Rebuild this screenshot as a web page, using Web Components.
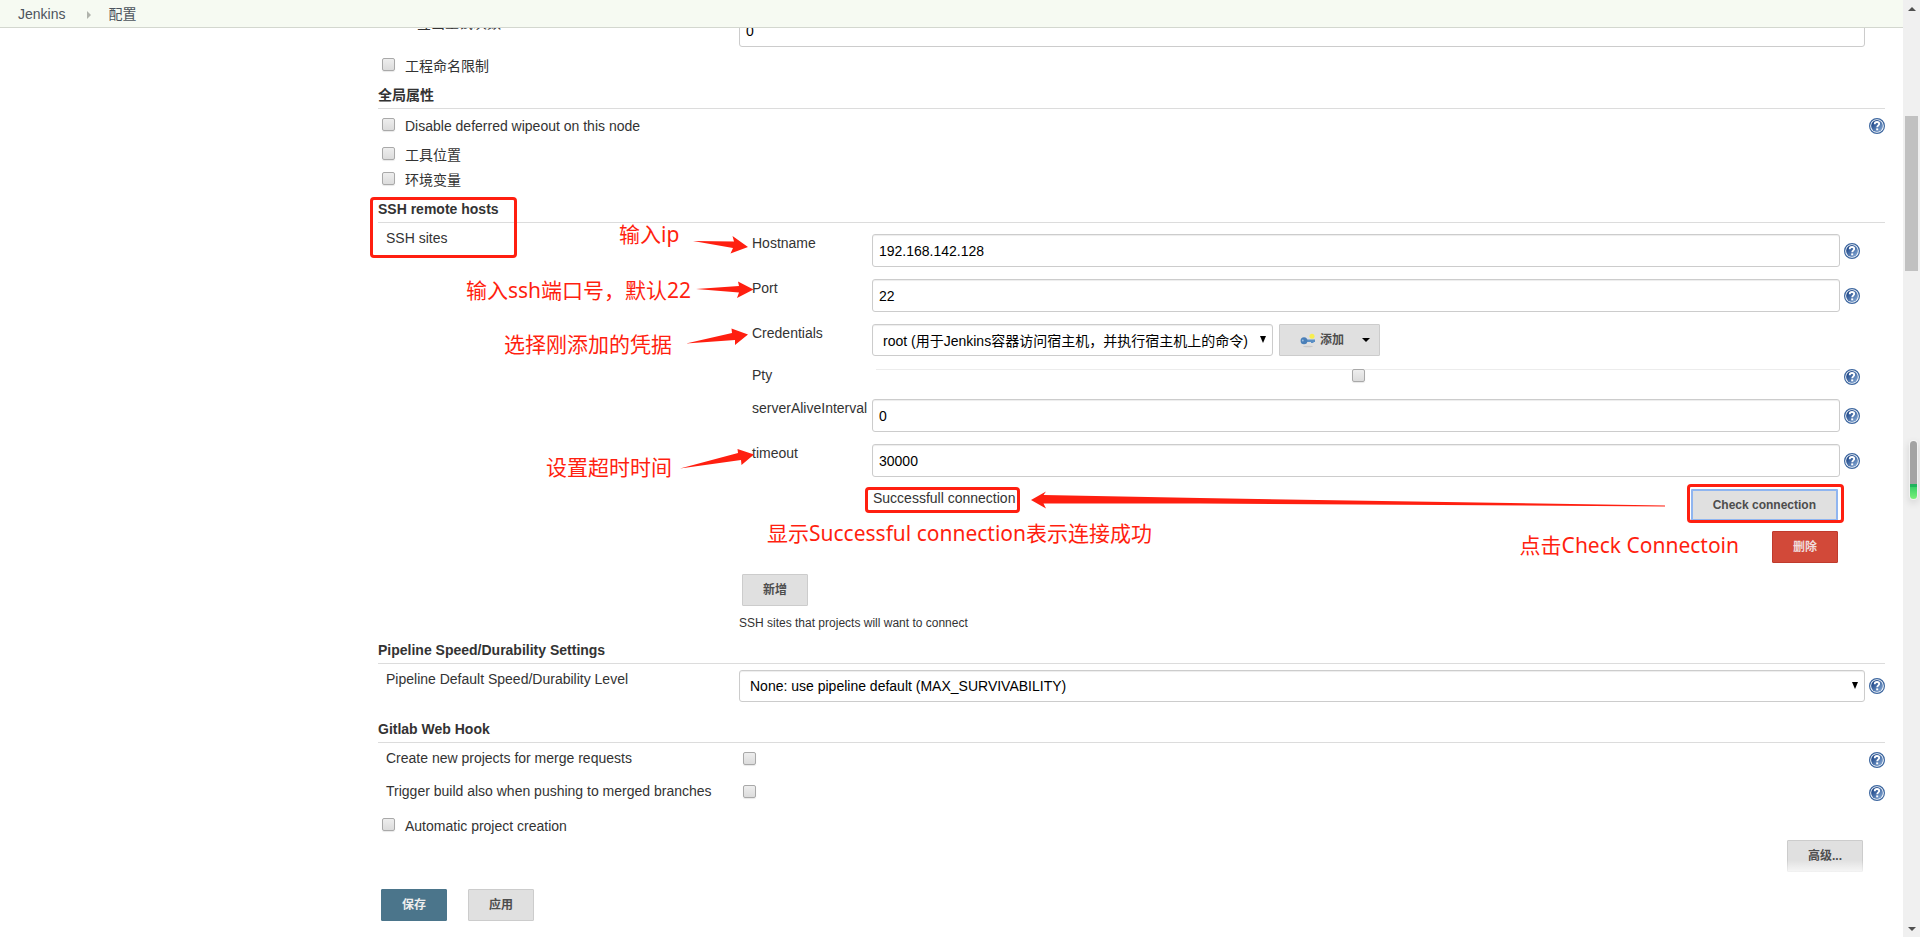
<!DOCTYPE html>
<html lang="zh-CN">
<head>
<meta charset="utf-8">
<title>配置 [Jenkins]</title>
<style>
  html, body { height: 100%; margin: 0; }
  body {
    background: #fff; color: #333; overflow: hidden;
    font: 14px/16px "Liberation Sans", "Noto Sans CJK SC", sans-serif;
  }
</style>
</head>
<body>
<jk-page>
  <jk-breadcrumbs slot="header"></jk-breadcrumbs>

  <jk-section>
    <jk-field compact kind="text" label="SCM签出重试次数" value="0"></jk-field>
    <jk-option label="工程命名限制"></jk-option>
  </jk-section>

  <jk-section heading="全局属性">
    <jk-option label="Disable deferred wipeout on this node" help></jk-option>
    <jk-option label="工具位置"></jk-option>
    <jk-option label="环境变量"></jk-option>
  </jk-section>

  <jk-section heading="SSH remote hosts" flush>
    <jk-group label="SSH sites">
      <jk-field inner kind="text" label="Hostname" value="192.168.142.128" help></jk-field>
      <jk-field inner kind="text" label="Port" value="22" help></jk-field>
      <jk-field inner kind="credentials" label="Credentials" value="root (用于Jenkins容器访问宿主机，并执行宿主机上的命令)"></jk-field>
      <jk-field inner kind="ruled" label="Pty" help></jk-field>
      <jk-field inner kind="text" label="serverAliveInterval" value="0" help></jk-field>
      <jk-field inner kind="text" label="timeout" value="30000" help></jk-field>
      <jk-validation status="Successfull connection"></jk-validation>
    </jk-group>
  </jk-section>

  <jk-section heading="Pipeline Speed/Durability Settings">
    <jk-field kind="select" label="Pipeline Default Speed/Durability Level" value="None: use pipeline default (MAX_SURVIVABILITY)" help></jk-field>
  </jk-section>

  <jk-section heading="Gitlab Web Hook" flush>
    <jk-field kind="check" label="Create new projects for merge requests" help></jk-field>
    <jk-field kind="check" label="Trigger build also when pushing to merged branches" help></jk-field>
    <jk-option label="Automatic project creation"></jk-option>
    <jk-advanced></jk-advanced>
  </jk-section>

  <jk-notes slot="notes"></jk-notes>
  <jk-button slot="footer" primary>保存</jk-button>
  <jk-button slot="footer">应用</jk-button>
  <jk-scrollbar slot="scrollbar"></jk-scrollbar>
</jk-page>

<script>
const RESET = `
  *, *::before, *::after { box-sizing: border-box; }
  input, select, button { font: inherit; margin: 0; }
`;
const CHECK = `
  input[type=checkbox] {
    appearance: none; width: 13px; height: 13px; flex: none; display: block;
    border: 1px solid #a9a9a9; border-radius: 2px;
    background: linear-gradient(#eee, #dcdcdc); box-shadow: 0 1px 1px #e8e8e8;
  }
`;

class Base extends HTMLElement {
  connectedCallback() {
    if (this.shadowRoot) return;
    this.attachShadow({ mode: 'open' }).innerHTML = `<style>${RESET}${this.css()}</style>${this.html()}`;
  }
  css() { return ''; }
  html() { return ''; }
  attr(name) { return this.getAttribute(name) || ''; }
}

customElements.define('jk-page', class extends Base {
  css() { return `
    :host { display: grid; grid-template: auto minmax(0, 1fr) auto / minmax(0, 1fr) 17px; height: 100vh; }
    header { grid-area: 1 / 1; }
    main { grid-area: 2 / 1; position: relative; overflow: hidden; padding: 0 18px 0 378px; }
    form { display: block; margin-top: -14px; }
    footer {
      grid-area: 3 / 1; position: relative; display: flex; gap: 21px;
      padding: 13px 18px 16px 381px; background: #fff;
    }
    footer::before {
      content: ""; position: absolute; left: 0; right: 0; bottom: 100%; height: 16px;
      background: linear-gradient(rgba(255,255,255,0), #fff);
    }
    aside { grid-area: 1 / 2 / 4 / 3; display: grid; }
  `; }
  html() { return `
    <header><slot name="header"></slot></header>
    <main><form><slot></slot></form><slot name="notes"></slot></main>
    <footer><slot name="footer"></slot></footer>
    <aside><slot name="scrollbar"></slot></aside>
  `; }
});

customElements.define('jk-breadcrumbs', class extends Base {
  css() { return `
    :host { display: block; background: #f6faf2; border-bottom: 1px solid #d3d7cf; }
    nav { display: flex; align-items: center; height: 27px; padding-left: 18px; }
    a { color: #4d545d; text-decoration: none; }
    svg { width: 4px; height: 8px; margin: 2px 17px 0 22px; }
  `; }
  html() { return `
    <nav aria-label="breadcrumb">
      <a href="#">Jenkins</a>
      <svg viewBox="0 0 4 8"><path d="M0 0L4 4L0 8Z" fill="#b0b3ac"/></svg>
      <a href="#">配置</a>
    </nav>
  `; }
});

customElements.define('jk-help', class extends Base {
  css() { return `
    :host { display: block; width: 16px; height: 16px; }
    button { display: block; width: 16px; height: 16px; padding: 0; border: 0; background: none; }
    svg { display: block; }
  `; }
  html() { return `
    <button type="button" aria-label="Help">
      <svg width="16" height="16" viewBox="0 0 16 16">
        <defs><linearGradient id="g" x1="0" y1="0" x2="1" y2="1">
          <stop offset=".15" stop-color="#1c4587"/><stop offset="1" stop-color="#8fb2dc"/>
        </linearGradient></defs>
        <circle cx="8" cy="8" r="7.4" fill="#fff" stroke="#3c669f" stroke-width="1.2"/>
        <circle cx="8" cy="8" r="5.9" fill="url(#g)"/>
        <path d="M5.7 6.200C5.7 4.600 6.700 4 8 4C9.400 4 10.200 4.800 10.200 5.900C10.200 7.300 8.200 7.400 8.200 9.300" fill="none" stroke="#fff" stroke-width="1.800"/>
        <rect x="7.200" y="10.400" width="2" height="1.900" fill="#fff"/>
      </svg>
    </button>
  `; }
});

customElements.define('jk-button', class extends Base {
  css() { return `
    :host { display: block; }
    button {
      display: flex; align-items: center; justify-content: center; height: 32px;
      padding: 0 20px; border: 1px solid #ccc; border-radius: 1px; background: #e0e0e0;
      color: #4d4d4d; font-size: 12px; font-weight: bold; line-height: 16px; white-space: nowrap;
      min-width: 66px;
    }
    :host([primary]) button { background: #4b758b; border-color: #4b758b; color: #eee; }
    :host([danger]) button { background: #d24939; border-color: #c03a2c; color: #f0dcdc; }
    :host([focused]) button { border: 2px solid #8fb5f0; }
    :host([menu]) button { padding: 0 9px 0 20px; gap: 4px; }
    :host([menu]) ::slotted(svg) { flex: none; }
  `; }
  html() { return `<button type="button"><slot></slot></button>`; }
});

customElements.define('jk-section', class extends Base {
  css() { return `
    :host { display: block; padding-bottom: 3px; }
    :host([flush]) { padding-bottom: 0; }
    h2 { margin: 0 0 6px; padding: 4px 0 5px; border-bottom: 1px solid #dcdcdc; font: inherit; font-weight: bold; }
  `; }
  html() { return `${this.hasAttribute('heading') ? `<h2>${this.attr('heading')}</h2>` : ''}<slot></slot>`; }
});

customElements.define('jk-option', class extends Base {
  css() { return CHECK + `
    :host { display: flex; justify-content: space-between; padding: 3px 0 6px 4px; }
    :host([help]) { padding-bottom: 10px; }
    label { display: flex; gap: 10px; height: 16px; }
  `; }
  html() { return `
    <label><input type="checkbox"><span>${this.attr('label')}</span></label>
    ${this.hasAttribute('help') ? '<jk-help></jk-help>' : ''}
  `; }
});

customElements.define('jk-field', class extends Base {
  css() { return CHECK + `
    :host {
      display: grid; grid-template-columns: 361px minmax(0, 1fr) 20px; align-items: start;
      padding-bottom: 12px;
    }
    :host([compact]) { padding-bottom: 8px; }
    :host([inner]) { grid-template-columns: 120px minmax(0, 1fr) 20px; }
    :host([inner][kind=credentials]) { padding-bottom: 11px; }
    :host([kind=check]) { height: 33px; padding-bottom: 0; }
    :host([kind=ruled]) { height: 32px; padding-bottom: 0; }
    label { padding: 1px 0 0 8px; white-space: nowrap; }
    :host([inner]) label { padding-left: 0; }
    :host([kind=ruled]) label { padding-top: 0; }
    input[type=text], select {
      display: block; width: 100%; height: 33px; padding: 0 6px; border: 1px solid #ccc; border-radius: 3px;
      background: #fff; color: #000; box-shadow: inset 0 1px 1px rgba(0,0,0,.075);
    }
    select { appearance: none; height: 32px; padding: 0 24px 0 10px; }
    .select { position: relative; }
    .select svg { position: absolute; right: 7px; top: 12px; }
    .cred { display: flex; gap: 6px; }
    .cred .select { width: 401px; }
    .cred select { padding-top: 2px; }
    jk-help { margin: 9px 0 0 4px; }
    :host([kind=select]) jk-help { margin-top: 8px; }
    :host([kind=check]) jk-help { margin-top: 3px; }
    :host([kind=check]) input { margin: 3px 0 0 4px; }
    :host([kind=ruled]) jk-help { margin-top: 2px; }
    .rule { display: flex; justify-content: center; margin: 2px 0 0 4px; border-top: 1px solid #ececec; }
    .rule input { margin-top: -1px; }
  `; }
  control() {
    const value = this.attr('value');
    const select = `<div class="select"><select id="c"><option>${value}</option></select>
      <svg width="6" height="7" viewBox="0 0 6 7"><path d="M0 0H6L3 7Z" fill="#000"/></svg></div>`;
    switch (this.attr('kind')) {
      case 'text': return `<input id="c" type="text" value="${value}">`;
      case 'select': return select;
      case 'check': return `<input id="c" type="checkbox">`;
      case 'ruled': return `<div class="rule"><input id="c" type="checkbox"></div>`;
      case 'credentials': return `<div class="cred">${select}<jk-button menu>
        <svg width="16" height="16" viewBox="0 0 16 16">
          <ellipse cx="8" cy="14.500" rx="5" ry=".8" fill="#c8c8c8"/>
          <path d="M5 7.500H15V10H13.500V11H11V10H5Z" fill="#5b8fc4"/>
          <ellipse cx="4" cy="8.700" rx="3.400" ry="3.500" fill="#4a7fb8"/>
          <circle cx="2.800" cy="8.500" r=".9" fill="#9fc0e0"/>
          <circle cx="12" cy="4.300" r="2.500" fill="#f7ee4f"/>
        </svg><span>添加</span>
        <svg width="8" height="4" viewBox="0 0 8 4" style="margin-left:14px"><path d="M0 0H8L4 4Z" fill="#000"/></svg>
      </jk-button></div>`;
    }
  }
  html() { return `
    <label for="c">${this.attr('label')}</label>
    ${this.control()}
    ${this.hasAttribute('help') ? '<jk-help></jk-help>' : ''}
  `; }
});

customElements.define('jk-validation', class extends Base {
  css() { return `
    :host { display: grid; grid-template-columns: auto auto; justify-content: space-between; row-gap: 10px; padding: 0 22px 11px 121px; }
    output { padding-top: 1px; }
    .delete { grid-column: 2; justify-self: end; }
  `; }
  html() { return `
    <output>${this.attr('status')}</output>
    <jk-button focused>Check connection</jk-button>
    <jk-button class="delete" danger>删除</jk-button>
  `; }
});

customElements.define('jk-group', class extends Base {
  css() { return `
    :host { display: grid; grid-template-columns: 361px minmax(0, 1fr); }
    h3 { margin: 0; padding: 1px 0 0 8px; font: inherit; }
    .sites { padding: 5px 25px 0 13px; }
    .add { padding-left: 3px; }
    p { margin: 9px 0 7px; font-size: 12px; }
  `; }
  html() { return `
    <h3>${this.attr('label')}</h3>
    <div>
      <div class="sites"><slot></slot></div>
      <jk-button class="add">新增</jk-button>
      <p>SSH sites that projects will want to connect</p>
    </div>
  `; }
});

customElements.define('jk-advanced', class extends Base {
  css() { return `:host { display: flex; justify-content: flex-end; padding-right: 22px; }`; }
  html() { return `<jk-button>高级...</jk-button>`; }
});

customElements.define('jk-notes', class extends Base {
  css() { return `
    :host {
      position: absolute; inset: 0; pointer-events: none; color: #ff1f10;
      font: 21px/24px "Noto Sans", "Noto Sans CJK SC", sans-serif;
    }
    span, i, svg { position: absolute; white-space: nowrap; }
    i { border: 3px solid #ff1f10; border-radius: 4px; }
    svg { fill: #ff1f10; overflow: visible; }
  `; }
  html() { return `
    <i style="left:370px;top:169px;width:147px;height:61px"></i>
    <i style="left:865px;top:459px;width:155px;height:26px"></i>
    <i style="right:59px;top:456px;width:157px;height:39px"></i>
    <span style="left:619px;top:194px">输入ip</span>
    <span style="left:466px;top:250px">输入ssh端口号，默认22</span>
    <span style="left:504px;top:304px">选择刚添加的凭据</span>
    <span style="left:546px;top:427px">设置超时时间</span>
    <span style="left:767px;top:493px">显示Successful connection表示连接成功</span>
    <span style="right:164px;top:505px">点击Check Connectoin</span>
    <svg style="left:680px;top:200px" width="80" height="250" viewBox="680 228 80 250">
      <path d="M693 241L734 241.500L732.500 236L748 247L730.500 253.500L733 248Z"/>
      <path d="M696 289L739 286L738 281.500L753.500 289.500L737 298L739 292.500Z"/>
      <path d="M686 343.500L732 333L731.500 328.500L748 334.500L735 345L735 340Z"/>
      <path d="M680 468.500L738 453L737.500 449L754 454.500L741.500 465L741 460Z"/>
    </svg>
    <svg style="left:1031px;top:463px" width="634" height="20" viewBox="1031 491 634 20">
      <path d="M1031 500L1046 491.500L1043.500 495L1200 498L1665 505.500V506.500L1200 503.500L1043.500 503.500L1046 508.500Z"/>
    </svg>
  `; }
});

customElements.define('jk-scrollbar', class extends Base {
  css() { return `
    :host { display: flex; flex-direction: column; background: #f0f0f0; }
    button { height: 17px; padding: 0; border: 0; background: none; display: grid; place-items: center; }
    .before { flex: 99; } .after { flex: 649; }
    .thumb { flex: 155; margin: 0 2px; background: #c1c1c1; }
    .meter {
      position: fixed; right: 3px; top: 441px; width: 7px; height: 58px; border-radius: 4px;
      background: linear-gradient(#a3a3a3 43px, #1fb45c 43px 46px, #3ad068 46px, #7af07a);
      box-shadow: 0 0 0 1px rgba(255,255,255,.5), 0 3px 7px 2px rgba(0,0,0,.09);
    }
  `; }
  html() { return `
    <button type="button" aria-label="Scroll up"><svg width="8" height="4" viewBox="0 0 8 4"><path d="M4 0L8 4H0Z" fill="#505050"/></svg></button>
    <div class="before"></div><div class="thumb"></div><div class="after"></div>
    <button type="button" aria-label="Scroll down"><svg width="8" height="4" viewBox="0 0 8 4"><path d="M0 0H8L4 4Z" fill="#505050"/></svg></button>
    <div class="meter"></div>
  `; }
});
</script>
</body>
</html>
